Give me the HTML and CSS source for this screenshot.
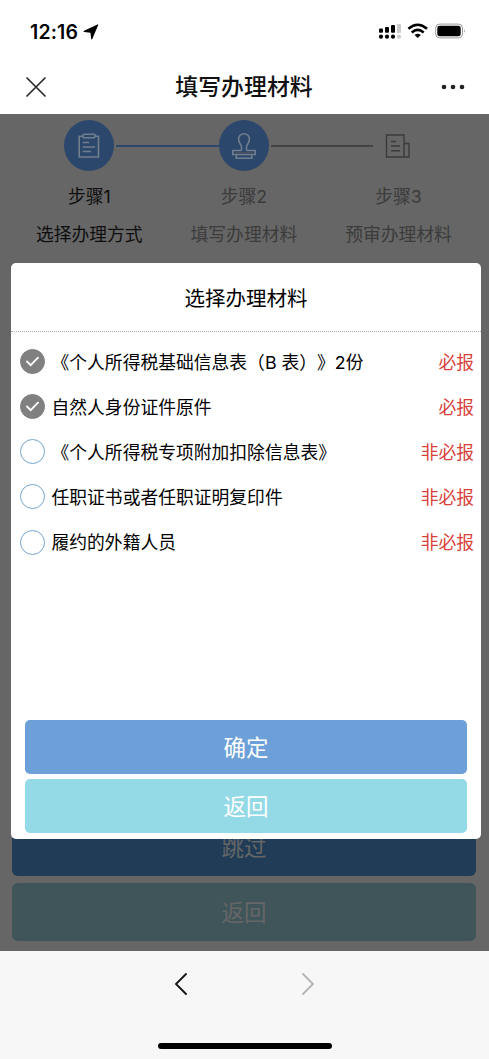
FILE: index.html
```html
<!DOCTYPE html>
<html lang="zh-CN">
<head>
<meta charset="utf-8">
<title>填写办理材料</title>
<link rel="stylesheet" href="styles.css">
</head>
<body>
<div class="screen">
  <div class="status-bar">
    <div class="clock">12:16
      <svg width="16" height="16" viewBox="0 0 16 16"><path d="M15.3.8 9.4 14.8Q8.7 16 8.1 14.7L7.5 8.7 1.2 8Q-.2 7.4 1 6.7L14.5.5Q15.4.1 15.3.8Z" fill="#000"/></svg>
    </div>
    <svg class="status-icons" width="90" height="18" viewBox="0 0 90 18">
      <g fill="#000"><rect x="1" y="6.5" width="4" height="4.2" rx="1"/><rect x="7" y="5" width="4" height="5.7" rx="1"/><rect x="13" y="3" width="4" height="7.7" rx="1"/><circle cx="3" cy="14.7" r="2.1"/><circle cx="9" cy="14.7" r="2.1"/><circle cx="15" cy="14.7" r="2.1"/></g>
      <g fill="#ccc"><rect x="19" y="2" width="4" height="9" rx="1"/><circle cx="21" cy="14.7" r="2.1"/></g>
      <g fill="none" stroke="#000" stroke-width="2.6"><path d="M30.4 6.7Q39.7-1.2 49 6.7"/><path d="M33.7 10.4Q39.7 5.5 45.7 10.4"/></g>
      <path d="M36.6 13Q39.7 10.7 42.8 13L39.7 16Z" fill="#000"/>
      <rect x="57.7" y="2.1" width="26.8" height="13.8" rx="4" fill="none" stroke="#999"/>
      <rect x="59.3" y="3.8" width="23.4" height="10.4" rx="2.3"/><path d="M86.2 7v4q1.8-2 0-4Z" fill="#999"/>
    </svg>
  </div>
  <header class="nav-bar">
    <svg class="close" width="20" height="20" viewBox="0 0 20 20"><path d="m1 1 18 18M19 1 1 19" stroke="#2b2b2b" stroke-width="1.7" stroke-linecap="round"/></svg>
    <h1 class="nav-title">填写办理材料</h1>
    <svg class="more" width="24" height="6" viewBox="0 0 24 6"><g fill="#222"><circle cx="3" cy="3" r="2.3"/><circle cx="12" cy="3" r="2.3"/><circle cx="21" cy="3" r="2.3"/></g></svg>
  </header>
  <main class="page">
    <div class="steps">
      <section class="step step-current">
        <span class="step-icon filled"><svg width="24" height="26" viewBox="0 0 24 26"><g fill="none" stroke="#717e8d" stroke-width="1.6"><path d="M6 3.2H2.2V24H21.5V3.2H18"/><rect x="6" y="1.2" width="12" height="3.6" rx="1"/><path d="M5.8 9.5H12M5.8 14H18M5.8 18.5H14"/></g></svg></span>
        <span class="step-name">步骤1</span><span class="step-text">选择办理方式</span>
      </section>
      <section class="step">
        <span class="step-icon filled"><svg width="28" height="28" viewBox="0 0 28 28"><g fill="none" stroke="#717e8d" stroke-width="1.6"><path d="M11.3 18.5Q12.2 14.5 10.4 12.2Q8.6 9.5 8.6 7.2A5.4 5.5 0 0 1 19.4 7.2Q19.4 9.5 17.6 12.2Q15.8 14.5 16.7 18.5M11.3 18.5H2.7V22.5H25.3V18.5H16.7M6.3 22.7V26.2H21.7V22.7"/></g><path d="M5 20.6H23" stroke="#4c4f55"/></svg></span>
        <span class="step-name">步骤2</span><span class="step-text">填写办理材料</span>
      </section>
      <section class="step">
        <span class="step-icon"><svg width="26" height="26" viewBox="0 0 26 26"><g fill="none" stroke="#3b3b3b" stroke-width="1.4"><path d="M19 24H1.5V2H19Zm0-13.5H24V24H19M6 8.5H11M6 13H15M6 17.7H15"/></g></svg></span>
        <span class="step-name">步骤3</span><span class="step-text">预审办理材料</span>
      </section>
      <i class="link link-done"></i><i class="link link-next"></i>
    </div>
    <div class="page-actions">
      <button class="page-button skip">跳过</button>
      <button class="page-button back">返回</button>
    </div>
    <div class="dialog">
      <h2 class="dialog-title">选择办理材料</h2>
      <ul class="materials">
        <li class="material"><span class="check checked"><svg width="13" height="11" viewBox="0 0 13 11"><path d="m1 5.5 3.7 3.7L12 1.7" /></svg></span><span>《个人所得税基础信息表（B 表）》2份</span><span class="tag">必报</span></li>
        <li class="material"><span class="check checked"><svg width="13" height="11" viewBox="0 0 13 11"><path d="m1 5.5 3.7 3.7L12 1.7" /></svg></span><span>自然人身份证件原件</span><span class="tag">必报</span></li>
        <li class="material"><span class="check"></span><span>《个人所得税专项附加扣除信息表》</span><span class="tag">非必报</span></li>
        <li class="material"><span class="check"></span><span>任职证书或者任职证明复印件</span><span class="tag">非必报</span></li>
        <li class="material"><span class="check"></span><span>履约的外籍人员</span><span class="tag">非必报</span></li>
      </ul>
      <div class="dialog-actions">
        <button class="dialog-button confirm">确定</button>
        <button class="dialog-button return">返回</button>
      </div>
    </div>
  </main>
  <footer class="browser-bar">
    <div class="history">
      <svg width="14" height="22" viewBox="0 0 14 22"><path d="M12 1 2 11 12 21" fill="none" stroke="#111" stroke-width="1.8" stroke-linecap="round"/></svg>
      <svg width="14" height="22" viewBox="0 0 14 22"><path d="m2 1 10 10L2 21" fill="none" stroke="#b5b5b5" stroke-width="1.8" stroke-linecap="round"/></svg>
    </div>
    <div class="home-indicator"></div>
  </footer>
</div>
</body>
</html>
```
FILE: styles.css
```css
* { box-sizing: border-box; }
body {
  margin: 0;
  background: #fff;
  color: #111;
  font: 17.8px/26px Inter, "Noto Sans CJK SC", sans-serif;
  font-kerning: none;
  text-spacing-trim: space-all;
}
h1, h2, ul { margin: 0; padding: 0; font-weight: 400; }
button { border: 0; padding: 2px 0 0; font-family: inherit; }
svg { display: block; flex: none; }
.screen { width: 489px; height: 1059px; display: flex; flex-direction: column; overflow: hidden; }

.status-bar { height: 62px; display: flex; justify-content: space-between; padding: 22px 21px 0 30px; }
.clock { display: flex; gap: 5px; align-items: center; height: 19px; font-size: 19.5px; font-weight: 600; color: #000; letter-spacing: .15px; }
.nav-bar { height: 52px; padding: 0 24px 3px 26px; display: grid; grid-template-columns: 60px 1fr 60px; align-items: center; }
.nav-title { font-size: 22.9px; line-height: 32px; font-weight: 500; text-align: center; margin: 1px 3px 0 0; }
.more { justify-self: end; }

.page { position: relative; height: 837px; background: #666; display: flex; flex-direction: column; justify-content: space-between; padding: 6px 13px 10px 12px; }
.steps { position: relative; display: grid; grid-template-columns: repeat(3, 154.6px); }
.step { display: flex; flex-direction: column; align-items: center; color: #3b3b3b; }
.step-current { color: #0e0e0e; }
.step-icon { width: 50px; height: 51px; display: grid; place-items: center; border-radius: 50%; }
.filled { background: #2c476c; }
.step-name { margin-top: 13px; }
.step-text { margin-top: 12px; }
.link { position: absolute; top: 25px; height: 1.5px; }
.link-done { left: 104px; width: 103px; background: #2c476c; }
.link-next { left: 259px; width: 102px; background: #444; }
.page-actions { display: flex; flex-direction: column; gap: 7px; }
.page-button { height: 58px; border-radius: 6px; font-size: 22.5px; line-height: 32px; color: #666; }
.skip { background: #203c57; }
.back { background: #40555a; }

.dialog { position: absolute; left: 11px; top: 149px; width: 470px; height: 576px; border-radius: 5px; background: #fff; display: flex; flex-direction: column; }
.dialog-title { height: 69px; border-bottom: 1px dotted #aaa; font-size: 20.5px; line-height: 71px; text-align: center; color: #000; }
.materials { list-style: none; padding: 7px 7px 0 9px; }
.material { height: 45.15px; display: flex; align-items: center; gap: 6.5px; color: #000; white-space: nowrap; }
.material > span:not(.check) { padding-top: 2px; }
.check { width: 25px; height: 25px; flex: none; border: 1.5px solid #78a6cf; border-radius: 50%; display: grid; place-items: center; }
.checked { background: #808080; border-color: #808080; }
.checked path { fill: none; stroke: #fff; stroke-width: 1.8; stroke-linecap: round; }
.tag { margin-left: auto; color: #d8413b; }
.dialog-actions { margin-top: auto; padding: 0 14px 6px; display: flex; flex-direction: column; gap: 5px; }
.dialog-button { height: 54px; border-radius: 5px; font-size: 22.5px; line-height: 32px; color: #fff; }
.confirm { background: #6d9fd8; }
.return { background: #93d9e6; }

.browser-bar { flex: 1; background: #f7f7f7; display: flex; flex-direction: column; align-items: center; justify-content: space-between; padding: 22px 0 10px; }
.history { display: flex; gap: 113px; }
.home-indicator { width: 174px; height: 6px; border-radius: 3px; background: #000; }
```
